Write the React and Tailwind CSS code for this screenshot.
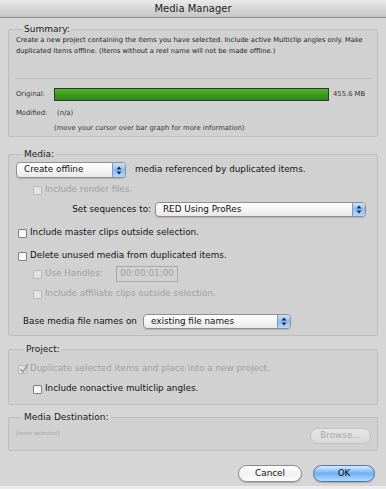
import React from 'react';

// Aqua-style Media Manager dialog

function Arrows() {
  return (
    <svg width="6" height="9" viewBox="0 0 6 9">
      <path d="M3 0.5 L5.5 3.5 L0.5 3.5 Z" fill="#1c2a40" />
      <path d="M3 8.5 L5.5 5.5 L0.5 5.5 Z" fill="#1c2a40" />
    </svg>
  );
}

function Popup({ label, className = '', height = 'h-[16px]' }) {
  return (
    <div className={`flex ${height} rounded-[4px] border border-[#8f8f8f] bg-gradient-to-b from-[#ffffff] to-[#e9e9e9] shadow-[0_1px_1px_rgba(0,0,0,0.15)] overflow-hidden ${className}`}>
      <span className="flex-1 pl-[7px] flex items-center text-[8.8px] text-[#111]">{label}</span>
      <span className="w-[13px] flex items-center justify-center bg-gradient-to-b from-[#cfe3fb] via-[#8dbbf0] to-[#b7d6fa] border-l border-[#7a9cc8]">
        <Arrows />
      </span>
    </div>
  );
}

function Check({ label, disabled, checked, className = '' }) {
  return (
    <div className={`flex items-center h-[12px] ${className}`}>
      <span
        className={`relative w-[9px] h-[9px] rounded-[1px] border ${disabled ? 'border-[#b9b9b9] bg-[#e2e2e2]' : 'border-[#7f7f7f] bg-gradient-to-b from-[#f2f2f2] to-[#ffffff]'}`}
      >
        {checked && (
          <svg className="absolute -top-[3px] left-0" width="10" height="11" viewBox="0 0 10 11">
            <path d="M1.5 6 L4 9 L9 1" fill="none" stroke="#9a9a9a" strokeWidth="1.6" />
          </svg>
        )}
      </span>
      <span className={`ml-[3px] text-[8.8px] whitespace-nowrap ${disabled ? 'text-[#a0a0a0]' : 'text-[#111]'}`}>{label}</span>
    </div>
  );
}

function Group({ title, className = '', children }) {
  return (
    <fieldset className={`mx-[8px] border border-[#bdbdbd] rounded-[2px] bg-[#d1d1d1] ${className}`}>
      <legend className="ml-[6px] px-[2px] text-[9px] leading-[12px] text-[#222]">{title}</legend>
      {children}
    </fieldset>
  );
}

export default function App() {
  return (
    <div className="w-[386px] h-[489px] bg-[#d6d6d6] flex flex-col font-['DejaVu_Sans',sans-serif] overflow-hidden">
      <div className="h-[18px] flex items-center justify-center bg-gradient-to-b from-[#e9e9e9] to-[#c6c6c6] border-b border-[#8e8e8e] text-[10px] text-[#222]">
        Media Manager
      </div>

      <Group title="Summary:" className="mt-[5px] px-[7px] pb-[2px]">
        <p className="text-[6.7px] leading-[11px] text-[#222]">
          Create a new project containing the items you have selected. Include active Multiclip angles only. Make duplicated items offline. (Items without a reel name will not be made offline.)
        </p>
        <div className="mt-[21px] -mx-[1px] border-t border-[#bcbcbc]" />
        <div className="mt-[9px] flex items-center text-[6.8px] text-[#333]">
          <span className="w-[38px]">Original:</span>
          <div className="w-[275px] h-[13px] border border-[#2b3a2b] bg-gradient-to-b from-[#56b332] via-[#3d9c20] to-[#2f8618]" />
          <span className="ml-[4px]">455.6 MB</span>
        </div>
        <div className="mt-[7px] flex items-center h-[11px] text-[6.8px] text-[#333]">
          <span className="w-[41px]">Modified:</span>
          <span>(n/a)</span>
        </div>
        <div className="mt-[4px] h-[11px] pl-[38px] text-[6.8px] leading-[11px] text-[#333]">
          (move your cursor over bar graph for more information)
        </div>
      </Group>

      <Group title="Media:" className="mt-[11px] pl-[7px] pr-[11px] pb-[6px]">
        <div className="mt-[2px] flex items-center">
          <Popup label="Create offline" className="w-[110px]" />
          <span className="ml-[9px] text-[8.8px] text-[#111]">media referenced by duplicated items.</span>
        </div>
        <Check label="Include render files." disabled className="mt-[6px] ml-[17px]" />
        <div className="mt-[6px] flex items-center">
          <span className="w-[139px] pr-[4px] text-right text-[8.8px] text-[#111]">Set sequences to:</span>
          <Popup label="RED Using ProRes" className="flex-1" height="h-[15px]" />
        </div>
        <Check label="Include master clips outside selection." className="mt-[10px] ml-[2px]" />
        <Check label="Delete unused media from duplicated items." className="mt-[11px] ml-[2px]" />
        <div className="mt-[4px] flex items-center h-[16px]">
          <Check label="Use Handles:" disabled className="ml-[17px] w-[83px]" />
          <div className="w-[62px] h-[16px] border border-[#a9a9a9] flex items-center justify-center text-[8.8px] text-[#a0a0a0]">
            00:00:01;00
          </div>
        </div>
        <Check label="Include affiliate clips outside selection." disabled className="mt-[6px] ml-[17px]" />
        <div className="mt-[14px] flex items-center">
          <span className="ml-[7px] w-[120px] text-[8.8px] text-[#111]">Base media file names on</span>
          <Popup label="existing file names" className="w-[148px]" height="h-[15px]" />
        </div>
      </Group>

      <Group title="Project:" className="mt-[7px] pl-[9px] pb-[9px]">
        <Check label="Duplicate selected items and place into a new project." disabled checked className="mt-[8px]" />
        <Check label="Include nonactive multiclip angles." className="mt-[8px] ml-[15px]" />
      </Group>

      <Group title="Media Destination:" className="mt-[6px] pl-[7px] pr-[6px] pb-[6px]">
        <div className="mt-[5px] flex items-start justify-between">
          <span className="text-[5.6px] leading-[10px] text-[#a3a3a3]">[none selected]</span>
          <button className="w-[61px] h-[16px] rounded-full border border-[#c2c2c2] bg-gradient-to-b from-[#e6e6e6] to-[#d9d9d9] text-[8.8px] text-[#a8a8a8]">
            Browse...
          </button>
        </div>
      </Group>

      <div className="mt-[14px] pr-[11px] flex justify-end gap-[11px]">
        <button className="w-[64px] h-[17px] rounded-full border border-[#8a8a8a] bg-gradient-to-b from-[#ffffff] via-[#f1f1f1] to-[#fdfdfd] shadow-[0_1px_1px_rgba(0,0,0,0.2)] text-[8.8px] text-[#111]">
          Cancel
        </button>
        <button className="w-[62px] h-[17px] rounded-full border border-[#4f74a8] bg-gradient-to-b from-[#d9ecff] via-[#6cb0f4] to-[#b6dcff] shadow-[0_1px_1px_rgba(0,0,0,0.2)] text-[8.8px] text-[#111]">
          OK
        </button>
      </div>

      <div className="mt-auto h-[3px] bg-[#ececec]" />
    </div>
  );
}
